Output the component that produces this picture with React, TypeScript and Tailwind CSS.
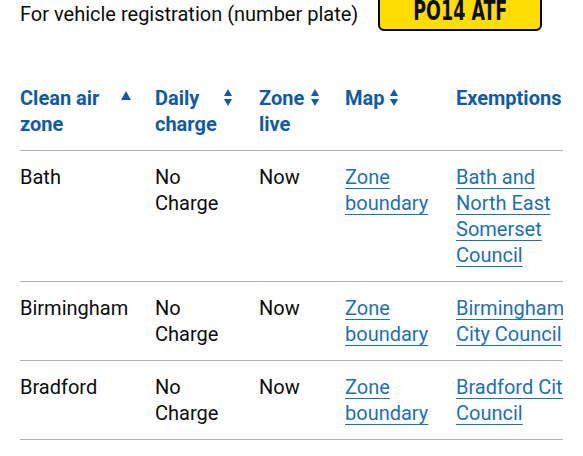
import React from 'react';

type Row = {
    zone: string;
    charge: string;
    live: string;
    exemption: string;
};

const rows: Row[] = [
    {zone: 'Bath', charge: 'No Charge', live: 'Now', exemption: 'Bath and North East Somerset Council'},
    {zone: 'Birmingham', charge: 'No Charge', live: 'Now', exemption: 'Birmingham City Council'},
    {zone: 'Bradford', charge: 'No Charge', live: 'Now', exemption: 'Bradford City Council'},
];

const SortAsc = () => (
    <svg width="10" height="9" viewBox="0 0 10 9" className="mt-[6px] shrink-0" aria-hidden="true">
        <polygon points="5,0 10,9 0,9" fill="currentColor"/>
    </svg>
);

const SortNone = () => (
    <svg width="8" height="17" viewBox="0 0 8 17" className="mt-[4px] shrink-0" aria-hidden="true">
        <polygon points="4,0 8,7 0,7" fill="currentColor"/>
        <polygon points="0,10 8,10 4,17" fill="currentColor"/>
    </svg>
);

const SortHeader: React.FC<{label: string; width?: string; asc?: boolean}> = ({label, width, asc}) => (
    <button className="flex items-start gap-[6px] text-left font-bold text-[#105ba3]">
        <span className={width}>{label}</span>
        {asc ? <SortAsc/> : <SortNone/>}
    </button>
);

const Link: React.FC<{children: React.ReactNode}> = ({children}) => (
    <a href="#" className="text-[#1d70b8] underline decoration-1 underline-offset-[4px]">
        {children}
    </a>
);

export default function App() {
    return (
        <div className="w-[583px] h-[456px] overflow-hidden bg-white text-[#0b0c0c] text-[20px] leading-[26px] font-['Roboto',sans-serif]">
            {/* Registration line with plate */}
            <div className="flex items-end pl-[20px] -mt-[10px]">
                <p className="w-[358px] shrink-0 pb-[4px]">For vehicle registration (number plate)</p>
                <div className="flex h-[41px] w-[164px] items-end justify-center rounded-md border-2 border-black bg-[#ffdd00] pb-[5px]">
                    <span className="inline-block scale-x-[0.72] text-[27px] leading-[26px] font-bold font-['DejaVu_Sans_Condensed','DejaVu_Sans',sans-serif]">
                        PO14 ATF
                    </span>
                </div>
            </div>

            {/* Clean air zones table */}
            <div className="ml-[20px] mt-[41px] w-[543px] overflow-hidden">
                <table className="table-fixed border-collapse w-[586px]">
                    <colgroup>
                        <col className="w-[135px]"/>
                        <col className="w-[104px]"/>
                        <col className="w-[86px]"/>
                        <col className="w-[111px]"/>
                        <col className="w-[150px]"/>
                    </colgroup>
                    <thead>
                        <tr className="border-b border-[#b1b4b6]">
                            <th className="py-[13px] pr-[20px] text-left align-top">
                                <SortHeader label="Clean air zone" width="w-[95px]" asc/>
                            </th>
                            <th className="py-[13px] pr-[20px] text-left align-top">
                                <SortHeader label="Daily charge" width="w-[63px]"/>
                            </th>
                            <th className="py-[13px] pr-[20px] text-left align-top">
                                <SortHeader label="Zone live" width="w-[46px]"/>
                            </th>
                            <th className="py-[13px] pr-[20px] text-left align-top">
                                <SortHeader label="Map"/>
                            </th>
                            <th className="py-[13px] pr-[20px] text-left align-top font-bold text-[#105ba3]">
                                Exemptions
                            </th>
                        </tr>
                    </thead>
                    <tbody>
                        {rows.map((row) => (
                            <tr key={row.zone} className="border-b border-[#b1b4b6]">
                                <td className="py-[13px] pr-[20px] align-top">{row.zone}</td>
                                <td className="py-[13px] pr-[20px] align-top">{row.charge}</td>
                                <td className="py-[13px] pr-[20px] align-top">{row.live}</td>
                                <td className="py-[13px] pr-[20px] align-top">
                                    <Link>Zone boundary</Link>
                                </td>
                                <td className="py-[13px] pr-[20px] align-top">
                                    <Link>{row.exemption}</Link>
                                </td>
                            </tr>
                        ))}
                    </tbody>
                </table>
            </div>
        </div>
    );
}
